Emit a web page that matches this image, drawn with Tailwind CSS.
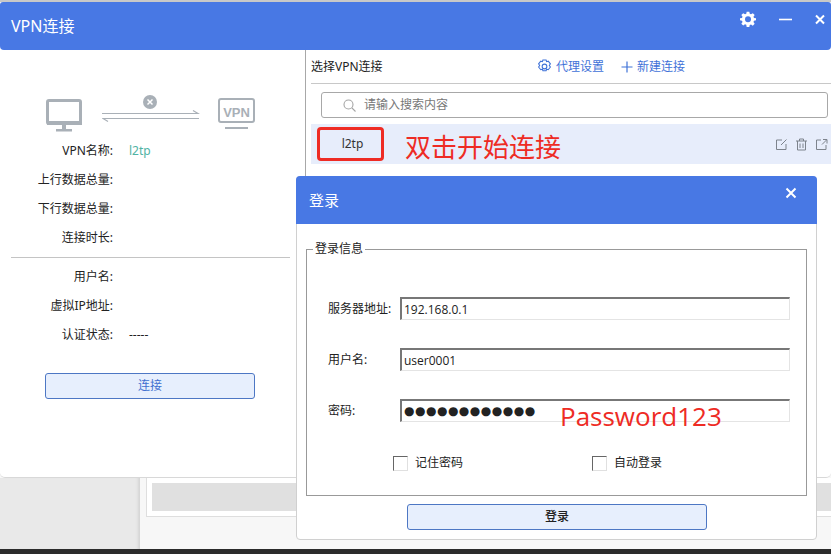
<!DOCTYPE html>
<html lang="zh-CN">
<head>
   <meta charset="utf-8"/>
   <script src="https://cdn.jsdelivr.net/npm/@tailwindcss/browser@4"></script>
   <title>VPN连接</title>
</head>
<body class="relative w-[831px] h-[554px] overflow-hidden bg-[#f7f7f7] font-['Noto_Sans','Noto_Sans_CJK_SC',sans-serif] text-[12px] text-[#222]">
   <div class="flex flex-col h-full">
      <div class="h-[2px] bg-[#c8c8c8]"></div>
      <!-- main window -->
      <div class="h-[476px] shrink-0 bg-white rounded-b-[5px] rounded-t-[3px] flex flex-col border-b border-[#d8d8d8]">
         <div class="h-[48px] shrink-0 bg-[#4878e4] rounded-t-[3px] rounded-b-[4px] flex justify-between pl-[11px] pr-[6px] text-white">
            <span class="text-[16px] leading-[48px]">VPN连接</span>
            <div class="flex items-start pt-[9px] gap-[23px]">
               <svg class="w-[16px] h-[16px]" viewBox="0 0 24 24" fill="#fff"><path fill-rule="evenodd" d="M10 1h4l.6 3.200 1.900.8L19.200 3.200l2.800 2.800-1.800 2.700.8 1.900L24 11v3l-3 .6-.8 1.900 1.800 2.700-2.800 2.800-2.700-1.800-1.900.8L14 24h-4l-.6-3.200-1.900-.8-2.700 1.800L2 19.200l1.800-2.700-.8-1.900L0 14v-3l3-.6.8-1.900L2 6l2.800-2.800L7.500 5l1.900-.8zM12 8a4.500 4.500 0 1 0 0 9 4.500 4.500 0 0 0 0-9z"/></svg>
               <svg class="w-[13px] h-[16px]" viewBox="0 0 13 16"><path d="M0 8.500h13" stroke="#fff" stroke-width="1.600"/></svg>
               <svg class="w-[10px] h-[16px]" viewBox="0 0 10 16"><path d="M1 4.500l8 8M9 4.500l-8 8" stroke="#fff" stroke-width="2"/></svg>
            </div>
         </div>
         <div class="flex flex-1 min-h-0">
            <!-- left panel -->
            <div class="w-[305px] shrink-0 pr-[15px] pl-[11px]">
               <div class="flex items-start h-[42px] mt-[45px] ml-[35px]">
                  <svg class="w-[37px] h-[33px] mt-[4px]" viewBox="0 0 37 33" fill="none"><rect x="1.500" y="1.500" width="33" height="23" rx="1.500" stroke="#a9b0b7" stroke-width="3"/><path d="M1 22h35v4H1z" fill="#a9b0b7"/><path d="M16 26h4v4h-4zM10 30h16v2.500H10z" fill="#a9b0b7"/></svg>
                  <svg class="w-[98px] h-[30px] ml-[19px]" viewBox="0 0 98 30" fill="none">
                     <circle cx="48" cy="7" r="7" fill="#a9b0b7"/><path d="M45.500 4.500l5 5M50.500 4.500l-5 5" stroke="#fff" stroke-width="1.500"/>
                     <path d="M0 18.500h96l-5-3M97 23.500H1l5 3" stroke="#a9b0b7" stroke-width="1.200"/>
                  </svg>
                  <svg class="w-[37px] h-[33px] ml-[18px] mt-[3px]" viewBox="0 0 37 33" fill="none"><rect x="1" y="1" width="35" height="23" rx="2" stroke="#a9b0b7" stroke-width="2"/><text x="18.500" y="18.500" text-anchor="middle" font-family="Liberation Sans" font-weight="700" font-size="13" fill="#a9b0b7">VPN</text><path d="M7 30h23" stroke="#a9b0b7" stroke-width="2"/><path d="M15 29h7v2h-7z" fill="#a9b0b7"/></svg>
               </div>
               <div class="flex flex-col mt-[-1px]">
                  <div class="flex h-[29px] items-center"><span class="w-[102px] text-right">VPN名称:</span><span class="ml-[16px] text-[#4fb3a4]">l2tp</span></div>
                  <div class="flex h-[29px] items-center"><span class="w-[102px] text-right">上行数据总量:</span></div>
                  <div class="flex h-[29px] items-center"><span class="w-[102px] text-right">下行数据总量:</span></div>
                  <div class="flex h-[29px] items-center"><span class="w-[102px] text-right">连接时长:</span></div>
                  <div class="h-px bg-[#c4c4c4] mt-[5px] mb-[4px]"></div>
                  <div class="flex h-[29px] items-center"><span class="w-[102px] text-right">用户名:</span></div>
                  <div class="flex h-[29px] items-center"><span class="w-[102px] text-right">虚拟IP地址:</span></div>
                  <div class="flex h-[29px] items-center"><span class="w-[102px] text-right">认证状态:</span><span class="ml-[16px]">-----</span></div>
               </div>
               <button class="block ml-[34px] mt-[24px] w-[210px] h-[26px] rounded-[3px] border border-[#4d77c4] bg-[#e7effd] text-[#3f6fd0]">连接</button>
            </div>
            <!-- right panel -->
            <div class="flex-1 min-w-0">
               <div class="border-l border-[#a8a8a8] pl-[5px] h-[126px]">
                  <div class="h-[34px] border-b border-[#c8c8c8] flex items-center">
                     <span class="w-[226px]">选择VPN连接</span>
                     <svg class="w-[15px] h-[15px]" viewBox="0 0 14 14" fill="none" stroke="#3f72d8" stroke-width="1"><path d="M5.500 1h3l.5 1.500 1.500-.5 2 2.500-1 1.500 1 1.500-2 2.500-1.500-.5-.5 1.500h-3l-.5-1.500-1.500.5-2-2.500 1-1.500-1-1.500 2-2.500 1.500.5z"/><circle cx="7" cy="7" r="2.200"/></svg>
                     <span class="ml-[4px] text-[#3f72d8]">代理设置</span>
                     <svg class="w-[12px] h-[12px] ml-[17px]" viewBox="0 0 12 12"><path d="M6 .5v11M.5 6h11" stroke="#3f72d8" stroke-width="1.200"/></svg>
                     <span class="ml-[4px] text-[#3f72d8]">新建连接</span>
                  </div>
                  <div class="ml-[10px] mt-[8px] mr-[3px] h-[26px] rounded-[3px] border border-[#a8a8a8] flex items-center pl-[21px] text-[#777]">
                     <svg class="w-[13px] h-[13px]" viewBox="0 0 13 13" fill="none" stroke="#a5a5a5" stroke-width="1.100"><circle cx="5.500" cy="5.500" r="4.500"/><path d="M9 9l3.500 3.500"/></svg>
                     <span class="ml-[8px]">请输入搜索内容</span>
                  </div>
                  <div class="mt-[6px] h-[40px] bg-[#e7edfb] flex items-center">
                     <div class="ml-[6px] w-[67px] h-[34px] rounded-[4px] border-[3px] border-[#ee2b24] flex items-center justify-center pl-[4px] text-[#333]">l2tp</div>
                     <span class="ml-[21px] mt-[4px] text-[26px] leading-none text-[#ee2b24] font-['Noto_Sans_CJK_SC',sans-serif]">双击开始连接</span>
                     <div class="ml-auto flex gap-[7px] pr-[3px]">
                        <svg class="w-[13px] h-[13px]" viewBox="0 0 13 13" fill="none" stroke="#7d838c"><path d="M7 2H1.500v9.500H11V6M6 7l5.500-5.500"/></svg>
                        <svg class="w-[13px] h-[13px]" viewBox="0 0 13 13" fill="none" stroke="#7d838c"><path d="M1 3h11M4.500 3V1h4v2M2.500 3v9h8V3M5 5.500V10M8 5.500V10"/></svg>
                        <svg class="w-[13px] h-[13px]" viewBox="0 0 13 13" fill="none" stroke="#7d838c"><path d="M6 2H1.500v9.500H11V7M7 6.500L11.500 2M8 1.500h4v4"/></svg>
                     </div>
                  </div>
               </div>
            </div>
         </div>
      </div>
      <!-- what shows behind the window -->
      <div class="flex-1 flex min-h-0">
         <div class="w-[140px] shrink-0 bg-[#e9e9e9] shadow-[inset_-4px_0_3px_-2px_#d4d4d4]"></div>
         <div class="flex-1 min-w-0 pl-[6px]">
            <div class="h-[39px] border border-t-0 border-r-0 border-[#dedede] bg-white pl-[5px] pt-[5px]"><div class="h-[28px] bg-[#e0e0e0]"></div></div>
         </div>
      </div>
      <div class="h-[5px] bg-[#2b2b2b]"></div>
   </div>

   <!-- login dialog -->
   <div class="absolute left-[296px] top-[176px] w-[521px] h-[364px] bg-white rounded-[4px] border border-[#d0d0d0] flex flex-col">
      <div class="h-[48px] shrink-0 bg-[#4878e4] rounded-t-[4px] flex justify-between pl-[13px] pr-[20px] text-white -mx-px -mt-px">
         <span class="text-[15px] leading-[48px]">登录</span>
         <svg class="w-[12px] h-[12px] mt-[11px]" viewBox="0 0 12 12"><path d="M1.500 1.500l9 9M10.500 1.500l-9 9" stroke="#fff" stroke-width="2"/></svg>
      </div>
      <fieldset class="mx-[9px] mt-[17px] h-[255px] border border-[#999] pl-[21px] pt-[40px] relative">
         <legend class="-ml-[15px] px-[2px] text-[12px] leading-[16px]">登录信息</legend>
         <div class="flex flex-col gap-[28px]">
            <div class="flex items-center h-[23px]"><span class="w-[72px]">服务器地址:</span><input class="w-[390px] h-[23px] border border-[#e4e4e4] border-t-2 border-l-2 border-t-[#777] border-l-[#777] pl-[2px] text-[12px] font-['Open_Sans',sans-serif] outline-none" value="192.168.0.1"/></div>
            <div class="flex items-center h-[23px]"><span class="w-[72px]">用户名:</span><input class="w-[390px] h-[23px] border border-[#e4e4e4] border-t-2 border-l-2 border-t-[#777] border-l-[#777] pl-[2px] text-[12px] font-['Open_Sans',sans-serif] outline-none" value="user0001"/></div>
            <div class="flex items-center h-[23px]"><span class="w-[72px]">密码:</span><input class="w-[390px] h-[23px] border border-[#e4e4e4] border-t-2 border-l-2 border-t-[#777] border-l-[#777] pl-[2px] text-[12px] outline-none tracking-[0.500px] font-['DejaVu_Sans',sans-serif]" value="●●●●●●●●●●●●"/></div>
         </div>
         <div class="flex mt-[32px] ml-[65px]">
            <label class="flex items-center w-[199px]"><span class="w-[15px] h-[15px] border border-[#e0e0e0] border-t-[#666] border-l-[#666] mr-[7px]"></span><span>记住密码</span></label>
            <label class="flex items-center"><span class="w-[15px] h-[15px] border border-[#e0e0e0] border-t-[#666] border-l-[#666] mr-[7px]"></span><span>自动登录</span></label>
         </div>
         <span class="absolute left-[253px] top-[146px] text-[26px] leading-none text-[#ee2b24] font-['Open_Sans',sans-serif]">Password123</span>
      </fieldset>
      <button class="block ml-[110px] mt-[8px] w-[300px] h-[26px] rounded-[3px] border border-[#4d77c4] bg-[#e7effd] font-medium">登录</button>
   </div>
</body>
</html>
